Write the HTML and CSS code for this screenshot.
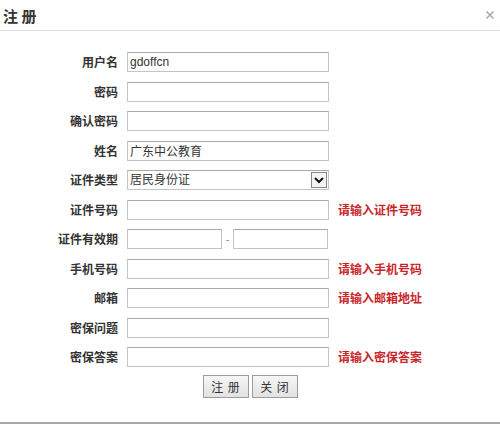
FILE: index.html
```html
<!DOCTYPE html>
<html lang="zh">
<head>
<meta charset="utf-8">
<title>注册</title>
<link rel="stylesheet" href="styles.css">
</head>
<body>
<div class="dialog">
  <div class="header">
    <span class="title">注 册</span>
    <svg class="close" width="10" height="10" viewBox="0 0 10 10"><path d="M1.5 1.5 L8.5 8.5 M8.5 1.5 L1.5 8.5" stroke="#aaa" stroke-width="1.6"/></svg>
  </div>
  <form class="form">
    <label class="lbl">用户名</label>
    <input class="field" type="text" value="gdoffcn">
    <span class="msg"></span>

    <label class="lbl">密码</label>
    <input class="field" type="password">
    <span class="msg"></span>

    <label class="lbl">确认密码</label>
    <input class="field" type="password">
    <span class="msg"></span>

    <label class="lbl">姓名</label>
    <input class="field" type="text" value="广东中公教育">
    <span class="msg"></span>

    <label class="lbl">证件类型</label>
    <div class="select-wrap">
      <select class="field select"><option>居民身份证</option></select>
      <svg class="arrow" width="16" height="16" viewBox="0 0 16 16"><rect x="0.5" y="0.5" width="15" height="15" fill="#f4f4f4" stroke="#8a8a8a"/><path d="M4 6 L8 10 L12 6" fill="none" stroke="#111" stroke-width="2"/></svg>
    </div>
    <span class="msg"></span>

    <label class="lbl">证件号码</label>
    <input class="field" type="text">
    <span class="msg">请输入证件号码</span>

    <label class="lbl">证件有效期</label>
    <div class="dates">
      <input class="field date" type="text">
      <span class="dash">-</span>
      <input class="field date" type="text">
    </div>
    <span class="msg"></span>

    <label class="lbl">手机号码</label>
    <input class="field" type="text">
    <span class="msg">请输入手机号码</span>

    <label class="lbl">邮箱</label>
    <input class="field" type="text">
    <span class="msg">请输入邮箱地址</span>

    <label class="lbl">密保问题</label>
    <input class="field" type="text">
    <span class="msg"></span>

    <label class="lbl">密保答案</label>
    <input class="field" type="text">
    <span class="msg">请输入密保答案</span>
  </form>
  <div class="buttons">
    <button class="btn" type="button">注 册</button>
    <button class="btn" type="button">关 闭</button>
  </div>
</div>
</body>
</html>
```

FILE: styles.css
```css
html, body {
  margin: 0;
  padding: 0;
  background: #fff;
}
body {
  width: 500px;
  height: 424px;
  overflow: hidden;
  font-family: "Liberation Sans", Arial, "Noto Sans CJK SC", sans-serif;
  color: #333;
}
.dialog {
  width: 500px;
  height: 424px;
  box-sizing: border-box;
  border-bottom: 2px solid #a8a8a8;
  display: flex;
  flex-direction: column;
}
.header {
  height: 30px;
  border-bottom: 1px solid #dcdcdc;
  display: flex;
  align-items: center;
  justify-content: space-between;
  padding: 0 5px 0 3px;
  flex-shrink: 0;
}
.title {
  font-family: "Noto Sans CJK SC", sans-serif;
  font-size: 15px;
  font-weight: bold;
  color: #333;
  letter-spacing: 0;
  line-height: 1;
  margin-top: 0;
}
.close {
  margin-right: 0;
  margin-top: -1px;
}
.form {
  margin-top: 21px;
  display: grid;
  grid-template-columns: 118px 202px 1fr;
  column-gap: 9px;
  row-gap: 9.5px;
  grid-auto-rows: 20px;
  align-items: center;
}
.lbl {
  text-align: right;
  font-family: "Noto Sans CJK SC", sans-serif;
  font-size: 12px;
  font-weight: bold;
  color: #333;
  line-height: 20px;
}
.field {
  box-sizing: border-box;
  width: 202px;
  height: 20px;
  margin: 0;
  border: 1px solid #c4c4c4;
  border-top-color: #a9a9a9;
  background: #fff;
  padding: 0 2px;
  font-family: "Liberation Sans", Arial, "Noto Sans CJK SC", sans-serif;
  font-size: 12px;
  color: #333;
  outline: none;
}
.select-wrap {
  position: relative;
  width: 202px;
  height: 20px;
}
.select {
  appearance: none;
  -webkit-appearance: none;
  border-radius: 0;
  padding-left: 2px;
}
.arrow {
  position: absolute;
  right: 2px;
  top: 2px;
  pointer-events: none;
}
.dates {
  display: flex;
  align-items: center;
  width: 202px;
}
.date {
  width: 95px;
}
.dash {
  width: 11px;
  text-align: center;
  font-size: 11px;
  color: #888;
}
.msg {
  font-family: "Noto Sans CJK SC", sans-serif;
  font-size: 12px;
  font-weight: bold;
  color: #c8262a;
  line-height: 20px;
  white-space: nowrap;
}
.buttons {
  margin-top: 8px;
  display: flex;
  justify-content: flex-start;
  padding-left: 203px;
  gap: 3px;
}
.btn {
  box-sizing: border-box;
  width: 46px;
  height: 23px;
  margin: 0;
  padding: 0;
  border: 1px solid #9c9c9c;
  background: linear-gradient(#f6f6f6, #e2e2e2);
  font-family: "Noto Sans CJK SC", sans-serif;
  font-size: 12px;
  color: #333;
  letter-spacing: 1px;
}
```
